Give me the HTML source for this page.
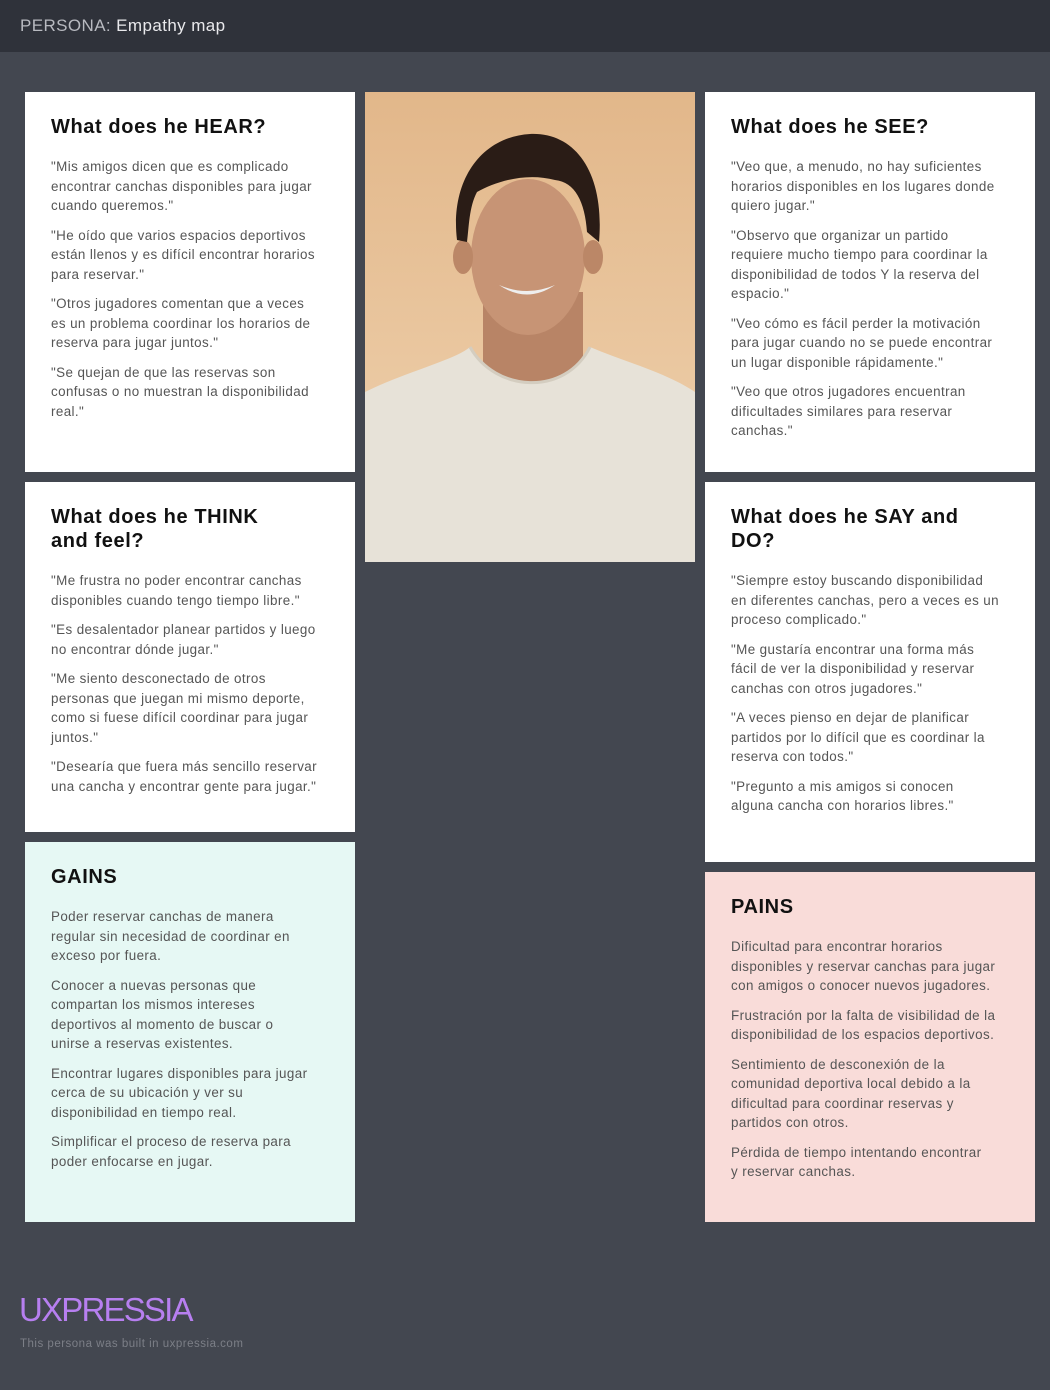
<!DOCTYPE html>
<html><head><meta charset="utf-8"><style>
*{margin:0;padding:0;box-sizing:border-box}
body{width:1050px;height:1390px;background:#434750;font-family:"Liberation Sans",sans-serif;position:relative;overflow:hidden}
.hdr{position:absolute;left:0;top:0;width:1050px;height:52px;background:#2f323a;color:#e9e9ec;font-size:17px;padding:16px 20px;letter-spacing:.4px}
.hdr span{color:#b8bac0}
.card{position:absolute;width:330px;background:#fff;padding:23px 26px 0 26px}
.card h2{font-size:20px;font-weight:bold;color:#111;line-height:24px;margin-bottom:18px;letter-spacing:.6px;white-space:nowrap}
.card p{font-size:13.4px;line-height:19.5px;color:#555;margin-bottom:10px;letter-spacing:.4px;white-space:nowrap}
.photo{position:absolute;left:365px;top:92px;width:330px;height:470px}
</style></head><body>
<div class="hdr"><span>PERSONA:</span> Empathy map</div>

<div class="card" style="left:25px;top:92px;height:380px">
<h2>What does he HEAR?</h2>
<p>"Mis amigos dicen que es complicado<br>encontrar canchas disponibles para jugar<br>cuando queremos."</p>
<p>"He oído que varios espacios deportivos<br>están llenos y es difícil encontrar horarios<br>para reservar."</p>
<p>"Otros jugadores comentan que a veces<br>es un problema coordinar los horarios de<br>reserva para jugar juntos."</p>
<p>"Se quejan de que las reservas son<br>confusas o no muestran la disponibilidad<br>real."</p>
</div>

<div class="card" style="left:25px;top:482px;height:350px">
<h2>What does he THINK<br>and feel?</h2>
<p>"Me frustra no poder encontrar canchas<br>disponibles cuando tengo tiempo libre."</p>
<p>"Es desalentador planear partidos y luego<br>no encontrar dónde jugar."</p>
<p>"Me siento desconectado de otros<br>personas que juegan mi mismo deporte,<br>como si fuese difícil coordinar para jugar<br>juntos."</p>
<p>"Desearía que fuera más sencillo reservar<br>una cancha y encontrar gente para jugar."</p>
</div>

<div class="card" style="left:25px;top:842px;height:380px;background:#e6f8f4">
<h2>GAINS</h2>
<p>Poder reservar canchas de manera<br>regular sin necesidad de coordinar en<br>exceso por fuera.</p>
<p>Conocer a nuevas personas que<br>compartan los mismos intereses<br>deportivos al momento de buscar o<br>unirse a reservas existentes.</p>
<p>Encontrar lugares disponibles para jugar<br>cerca de su ubicación y ver su<br>disponibilidad en tiempo real.</p>
<p>Simplificar el proceso de reserva para<br>poder enfocarse en jugar.</p>
</div>

<div class="card" style="left:705px;top:92px;height:380px">
<h2>What does he SEE?</h2>
<p>"Veo que, a menudo, no hay suficientes<br>horarios disponibles en los lugares donde<br>quiero jugar."</p>
<p>"Observo que organizar un partido<br>requiere mucho tiempo para coordinar la<br>disponibilidad de todos Y la reserva del<br>espacio."</p>
<p>"Veo cómo es fácil perder la motivación<br>para jugar cuando no se puede encontrar<br>un lugar disponible rápidamente."</p>
<p>"Veo que otros jugadores encuentran<br>dificultades similares para reservar<br>canchas."</p>
</div>

<div class="card" style="left:705px;top:482px;height:380px">
<h2>What does he SAY and<br>DO?</h2>
<p>"Siempre estoy buscando disponibilidad<br>en diferentes canchas, pero a veces es un<br>proceso complicado."</p>
<p>"Me gustaría encontrar una forma más<br>fácil de ver la disponibilidad y reservar<br>canchas con otros jugadores."</p>
<p>"A veces pienso en dejar de planificar<br>partidos por lo difícil que es coordinar la<br>reserva con todos."</p>
<p>"Pregunto a mis amigos si conocen<br>alguna cancha con horarios libres."</p>
</div>

<div class="card" style="left:705px;top:872px;height:350px;background:#f9dcd9">
<h2>PAINS</h2>
<p>Dificultad para encontrar horarios<br>disponibles y reservar canchas para jugar<br>con amigos o conocer nuevos jugadores.</p>
<p>Frustración por la falta de visibilidad de la<br>disponibilidad de los espacios deportivos.</p>
<p>Sentimiento de desconexión de la<br>comunidad deportiva local debido a la<br>dificultad para coordinar reservas y<br>partidos con otros.</p>
<p>Pérdida de tiempo intentando encontrar<br>y reservar canchas.</p>
</div>

<svg class="photo" viewBox="0 0 330 470" xmlns="http://www.w3.org/2000/svg">
<defs><linearGradient id="bg" x1="0" y1="0" x2="0" y2="1"><stop offset="0" stop-color="#e2b78a"/><stop offset="1" stop-color="#f0d3b0"/></linearGradient></defs>
<rect width="330" height="470" fill="url(#bg)"/>
<rect x="118" y="200" width="100" height="90" fill="#b88466"/>
<ellipse cx="163" cy="165" rx="57" ry="78" fill="#c79475"/>
<ellipse cx="98" cy="165" rx="10" ry="17" fill="#bb8767"/>
<ellipse cx="228" cy="165" rx="10" ry="17" fill="#bb8767"/>
<path d="M92 148 C85 90 115 45 165 42 C210 40 240 80 234 150 L222 140 C220 110 210 90 190 88 C160 80 130 90 112 100 C104 115 104 135 102 150 Z" fill="#2a1c16"/>
<path d="M134 193 Q162 212 190 193 Q162 205 134 193Z" fill="#eee"/>
<path d="M0 300 C40 280 90 268 105 255 C130 300 200 305 225 255 C260 270 300 280 330 300 L330 470 L0 470Z" fill="#e7e2d8"/>
<path d="M105 255 C130 300 200 305 225 255" fill="none" stroke="#d4cdc0" stroke-width="3"/>
</svg>

<div style="position:absolute;left:19px;top:1290px;font-size:33px;color:#b77ff0;letter-spacing:-1.8px;line-height:40px">UXPRESSIA</div>
<div style="position:absolute;left:20px;top:1338px;font-size:11.5px;color:#7c7f87;letter-spacing:.5px">This persona was built in uxpressia.com</div>
</body></html>
